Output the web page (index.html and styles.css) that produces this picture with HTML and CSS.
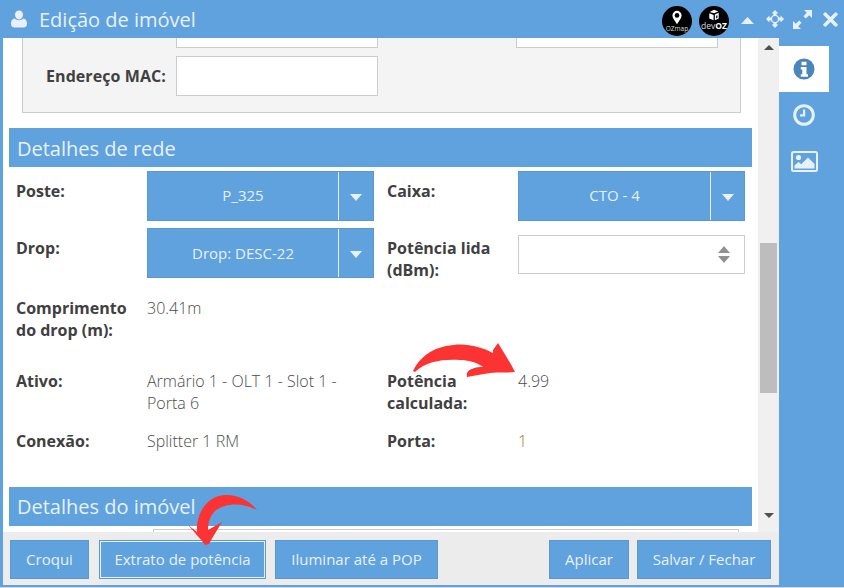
FILE: index.html
```html
<!DOCTYPE html>
<html lang="pt">
<head>
<meta charset="utf-8">
<title>Edição de imóvel</title>
<link rel="stylesheet" href="styles.css">
</head>
<body>
<div class="window">
  <header class="titlebar">
    <svg class="user-icon" viewBox="0 0 16 18"><path fill="#e8f1fa" d="M8 0.5c2.4 0 4 1.900 4 4.300S10.400 9.400 8 9.400 4 7.200 4 4.800 5.600 0.500 8 0.500zM3.700 8.600C4.800 9.700 6.300 10.300 8 10.300s3.200-.6 4.300-1.700c2.300.3 3.700 2.200 3.700 5.200 0 2.500-1.500 3.700-3.400 3.700H3.400C1.500 17.500 0 16.300 0 13.800c0-3 1.400-4.900 3.700-5.200z"/></svg>
    <span class="title">Edição de imóvel</span>
    <div class="tools">
      <span class="logo logo-a">
        <svg class="pin" viewBox="0 0 12 16"><path fill="#fff" d="M6 0a5.500 5.500 0 0 1 5.500 5.500C11.500 9 8 12 6 16 4 12 .5 9 .5 5.500A5.500 5.500 0 0 1 6 0z"/><circle cx="6" cy="5.500" r="2.800" fill="#000"/></svg>
        <span class="logo-text">OZmap</span>
      </span>
      <span class="logo logo-b">
        <svg class="cube" viewBox="0 0 14 13"><path fill="#fff" d="M2 3l5-2.500 5 2-5 2zM1.500 4.500L6.500 6.500V12.500L1.500 10.500zM8 6L12.500 4V10.500L8 12.500zM9.500 7.500v3l1.500-.7V6.800z"/></svg>
        <span class="logo-text">dev<b>OZ</b></span>
      </span>
      <svg class="tool t-up" viewBox="0 0 13 7"><path fill="#e8f1fa" d="M6.500 0L13 7H0z"/></svg>
      <svg class="tool t-move" viewBox="0 0 18 18"><path fill="#e8f1fa" d="M9 0l3.400 3.400H10.600v1.500a4.300 4.300 0 0 1 2.500 2.500h1.500V5.600L18 9l-3.400 3.400v-1.800h-1.500a4.300 4.300 0 0 1-2.500 2.500v1.500h1.800L9 18l-3.400-3.400h1.800v-1.500a4.300 4.300 0 0 1-2.500-2.500H3.400v1.800L0 9l3.400-3.400v1.800h1.500a4.300 4.300 0 0 1 2.500-2.500V3.400H5.600zM9 6.100A2.900 2.900 0 1 0 9 11.900 2.900 2.900 0 0 0 9 6.100z"/></svg>
      <svg class="tool t-expand" viewBox="0 0 19 19"><path fill="#e8f1fa" d="M11 0h8v8l-2.800-2.800-3.400 3.400-2.400-2.400 3.400-3.400zM8 19H0v-8l2.800 2.800 3.400-3.400 2.400 2.400-3.400 3.400z"/></svg>
      <svg class="tool t-close" viewBox="0 0 15 15"><path fill="#e8f1fa" d="M3 0.500L7.500 5 12 0.500a1 1 0 0 1 1.400 0l1.100 1.100a1 1 0 0 1 0 1.400L10 7.500l4.500 4.500a1 1 0 0 1 0 1.400l-1.100 1.100a1 1 0 0 1-1.400 0L7.500 10 3 14.500a1 1 0 0 1-1.400 0L.5 13.400a1 1 0 0 1 0-1.400L5 7.500.5 3a1 1 0 0 1 0-1.400L1.600.5A1 1 0 0 1 3 .5z"/></svg>
    </div>
  </header>

  <div class="body">
    <div class="main">
      <div class="scroll-row">
        <div class="content">
          <div class="fieldset">
            <div class="stub-row">
              <span class="input stub stub-a"></span>
              <span class="input stub stub-b"></span>
            </div>
            <div class="mac-row">
              <label class="label mac-label">Endereço MAC:</label>
              <span class="input mac-input"></span>
            </div>
          </div>

          <h2 class="section">Detalhes de rede</h2>

          <div class="row row-select first">
            <label class="label col-l">Poste:</label>
            <div class="combo combo-l"><span class="combo-text">P_325</span><span class="combo-btn"><i class="caret"></i></span></div>
            <label class="label col-r">Caixa:</label>
            <div class="combo combo-r"><span class="combo-text">CTO - 4</span><span class="combo-btn"><i class="caret"></i></span></div>
          </div>

          <div class="row row-select row-drop">
            <label class="label col-l">Drop:</label>
            <div class="combo combo-l"><span class="combo-text">Drop: DESC-22</span><span class="combo-btn"><i class="caret"></i></span></div>
            <label class="label col-r">Potência lida (dBm):</label>
            <div class="input spinner"><span class="spin"><i class="spin-up"></i><i class="spin-down"></i></span></div>
          </div>

          <div class="row row-comp">
            <label class="label col-l">Comprimento do drop (m):</label>
            <span class="value val-l">30.41m</span>
          </div>

          <div class="row row-ativo">
            <label class="label col-l">Ativo:</label>
            <span class="value val-l">Armário 1 - OLT 1 - Slot 1 - Porta 6</span>
            <label class="label col-r">Potência calculada:</label>
            <span class="value val-r">4.99</span>
          </div>

          <div class="row row-conexao">
            <label class="label col-l">Conexão:</label>
            <span class="value val-l">Splitter 1 RM</span>
            <label class="label col-r">Porta:</label>
            <span class="value val-r porta">1</span>
          </div>

          <h2 class="section section-2">Detalhes do imóvel</h2>
          <div class="next-box"></div>
        </div>
        <div class="scrollbar">
          <i class="sb-up"></i>
          <div class="thumb"></div>
          <i class="sb-down"></i>
        </div>
      </div>
      <footer class="footer">
        <button class="btn btn-croqui">Croqui</button>
        <button class="btn btn-focus">Extrato de potência</button>
        <button class="btn btn-pop">Iluminar até a POP</button>
        <span class="spacer"></span>
        <button class="btn btn-apply">Aplicar</button>
        <button class="btn btn-save">Salvar / Fechar</button>
      </footer>
    </div>
    <nav class="tabs">
      <span class="tab active">
        <svg class="tab-icon" viewBox="0 0 22 22"><circle cx="11" cy="11" r="10.500" fill="#4b86bb"/><path fill="#fff" d="M8.500 3.700h5v3.600h-5zM7.800 9h5.700v7.200h1.500v2.600H7.800v-2.600h1.500v-4.600H7.800z"/></svg>
      </span>
      <span class="tab">
        <svg class="tab-icon" viewBox="0 0 22 22"><circle cx="11" cy="11" r="9.300" fill="none" stroke="#e8f1fa" stroke-width="3"/><path fill="#e8f1fa" d="M10 5.500h2.200v7H7v-2.200h3z"/></svg>
      </span>
      <span class="tab">
        <svg class="tab-icon pic" viewBox="0 0 27 21"><rect x="1" y="1" width="25" height="19" rx="1.500" fill="none" stroke="#e8f1fa" stroke-width="2"/><circle cx="7.500" cy="6.500" r="2.600" fill="#e8f1fa"/><path fill="#e8f1fa" d="M3.500 17.500v-3l4-3.500 2.700 2.300L17 6.500l6.500 6.500v4.500z"/></svg>
      </span>
    </nav>
  </div>

  <svg class="arrow arrow-a" viewBox="410 340 110 45"><path fill="#fb3333" d="M413 371C419 358 431 349 446 346 464 342 480 346 493 353L493 350 498 343C504 353 510 362 515 372 508 373 499 372 490 373 482 374 474 376 467 377 466 372 469 370 472 369 476 367 480 367 483 367 476 362 468 360 460 360 443 359 427 361 415 372z"/></svg>
  <svg class="arrow arrow-b" viewBox="185 490 75 58"><path fill="#fb3333" d="M257 510C246 497 230 492 216 497 204 502 196 516 197 532L188 525 C194 532 201 539 205 545L209 544C213 536 218 529 222 522L208 530C208 522 210 517 214 512 222 504 240 501 257 510z"/></svg>
</div>
</body>
</html>
```

FILE: styles.css
```css
* { box-sizing: border-box; }
html, body { margin: 0; padding: 0; height: 100%; overflow: hidden; }
body {
  background: #d8d8d8;
  font-family: "Open Sans", sans-serif;
  font-size: 14px;
  color: #404040;
}
.window {
  position: relative;
  width: 844px;
  height: 587px;
  background: #5fa2dd;
  padding: 0 0 2px 3px;
  display: flex;
  flex-direction: column;
}
.titlebar {
  height: 38px;
  flex: none;
  display: flex;
  align-items: center;
  color: #e8f1fa;
  padding-left: 8px;
}
.user-icon { width: 16px; height: 18px; margin-top: -1px; }
.title { font-size: 20px; margin-left: 12px; }
.tools { margin-left: auto; display: flex; align-items: center; }
.logo {
  width: 30px; height: 30px; border-radius: 50%;
  background: #000;
  color: #ddd;
  display: flex; flex-direction: column; align-items: center;
  margin-right: 7px;
  margin-top: 3px;
}
.pin { width: 10px; height: 15px; margin-top: 4px; }
.cube { width: 12px; height: 12px; margin-top: 3px; }
.logo-text { font-size: 6.500px; line-height: 8px; white-space: nowrap; }
.logo-text b { color: #fff; }
.logo-b .logo-text { font-size: 8.500px; line-height: 10px; }
.tool { display: block; flex: none; }
.t-up { width: 13px; height: 7px; margin-left: 5px; margin-top: 2px; }
.t-move { width: 18px; height: 18px; margin-left: 12px; }
.t-expand { width: 19px; height: 19px; margin-left: 9px; margin-top: 1px; }
.t-close { width: 15px; height: 15px; margin-left: 11px; margin-right: 6px; margin-top: 1px; }

.body { flex: 1; display: flex; min-height: 0; }
.main { width: 776px; flex: none; display: flex; flex-direction: column; background: #fff; }
.scroll-row { height: 494px; display: flex; overflow: hidden; flex: none; }
.content { width: 755px; flex: none; overflow: hidden; padding-left: 6px; }

.fieldset {
  width: 719px;
  height: 75px;
  margin-left: 13px;
  background: #f4f4f4;
  border: 1px solid #ccc;
  border-top: 0;
}
.input { display: block; background: #fff; border: 1px solid #ccc; }
.stub-row { display: flex; height: 10px; }
.stub { height: 10px; border-top: 0; }
.stub-a { width: 202px; margin-left: 153px; }
.stub-b { width: 202px; margin-left: 138px; }
.mac-row { display: flex; align-items: center; margin-top: 8px; }
.label { font-weight: 700; font-size: 16px; line-height: 22px; color: #404040; }
.mac-label { width: 153px; text-align: right; padding-right: 10px; white-space: nowrap; letter-spacing: .08px; }
.mac-input { width: 202px; height: 40px; }

.section {
  margin: 15px 0 0;
  width: 743px;
  height: 39px;
  background: #5fa2dd;
  color: #e8f1fa;
  font-weight: 400;
  font-size: 20px;
  line-height: 41px;
  padding-left: 8px;
}
.section-2 { margin-top: 35px; line-height: 40px; }

.row { display: flex; align-items: flex-start; padding-left: 7px; }
.first { margin-top: 4px; }
.row-select { height: 50px; margin-bottom: 7px; }
.row-comp { height: 66px; margin-top: 19px; }
.row-ativo { height: 44px; margin-top: 7px; }
.row-conexao { height: 22px; margin-top: 16px; }
.row-select .label { padding-top: 9px; }
.col-l { width: 131px; flex: none; }
.col-r { width: 131px; flex: none; }
.combo {
  height: 50px;
  flex: none;
  display: flex;
  background: #5fa2dd;
  border: 1px solid #5a98d0;
  color: #e8f1fa;
}
.combo-l { width: 227px; margin-right: 13px; }
.combo-r { width: 227px; }
.combo-text { flex: 1; text-align: center; line-height: 47px; font-size: 15px; }
.row-drop .combo-text { line-height: 49px; }
.combo-btn {
  width: 35px; flex: none;
  border-left: 1px solid #e8f1fa;
  display: flex; align-items: center; justify-content: center;
}
.combo-r .combo-btn { width: 34px; }
.caret { width: 0; height: 0; border-left: 6px solid transparent; border-right: 6px solid transparent; border-top: 7px solid #e8f1fa; margin-top: 2px; }
.spinner { width: 227px; height: 39px; margin-top: 7px; display: flex; align-items: center; justify-content: flex-end; padding-right: 14px; }
.spin { display: flex; flex-direction: column; gap: 3px; }
.spin-up { width: 0; height: 0; border-left: 6px solid transparent; border-right: 6px solid transparent; border-bottom: 7px solid #919191; }
.spin-down { width: 0; height: 0; border-left: 6px solid transparent; border-right: 6px solid transparent; border-top: 7px solid #919191; }
.value { font-size: 16px; font-weight: 300; line-height: 22px; color: #4c4c4c; flex: none; }
.val-l { width: 227px; margin-right: 13px; }
.val-r { width: 227px; }
.porta { color: #a8701e; }

.next-box {
  width: 586px;
  height: 20px;
  margin-left: 144px;
  margin-top: 3px;
  border: 1px solid #ccc;
  border-bottom: 0;
}

.scrollbar {
  width: 21px; flex: none;
  background: #f0f0f0;
  display: flex; flex-direction: column; align-items: center;
  padding-top: 7px;
}
.sb-up { width: 0; height: 0; border-left: 5px solid transparent; border-right: 5px solid transparent; border-bottom: 5px solid #505050; }
.sb-down { width: 0; height: 0; border-left: 5px solid transparent; border-right: 5px solid transparent; border-top: 5px solid #505050; margin-top: 120px; }
.thumb { width: 17px; height: 150px; background: #bdbdbd; margin-top: 193px; }

.footer {
  flex: 1;
  background: #ececec;
  display: flex;
  align-items: flex-start;
  padding: 8px 8px 0 7px;
}
.btn {
  height: 39px;
  background: #5fa2dd;
  border: 1px solid #5a98d0;
  color: #e8f1fa;
  font-family: "Open Sans", sans-serif;
  font-size: 15px;
  padding: 0 0 2px;
}
.btn-croqui { width: 79px; }
.btn-focus { width: 167px; margin-left: 10px; outline: 1px solid #e8f1fa; outline-offset: -2px; }
.btn-pop { width: 163px; margin-left: 9px; }
.spacer { flex: 1; }
.btn-apply { width: 80px; }
.btn-save { width: 134px; margin-left: 8px; }

.tabs { flex: 1; display: flex; flex-direction: column; padding-top: 8px; }
.tab { width: 50px; height: 46px; display: flex; align-items: center; justify-content: center; }
.tab.active { background: #fff; }
.tab-icon { width: 22px; height: 22px; display: block; }
.tab-icon.pic { width: 27px; height: 21px; }

.arrow { position: absolute; display: block; }
.arrow-a { left: 410px; top: 340px; width: 110px; height: 45px; }
.arrow-b { left: 185px; top: 490px; width: 75px; height: 58px; }
```
